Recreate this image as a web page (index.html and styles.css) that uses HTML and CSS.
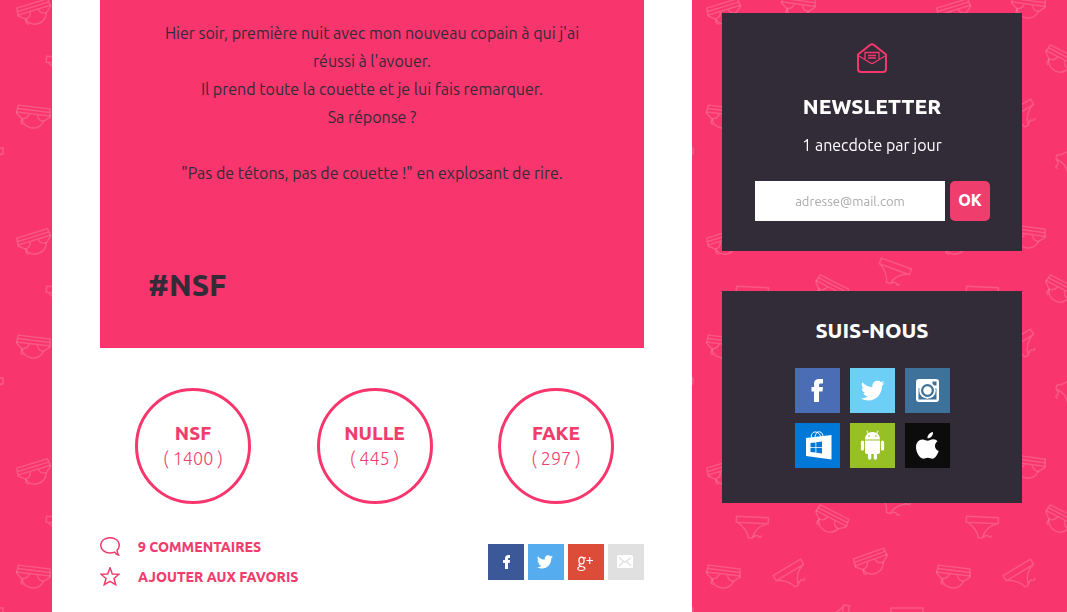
FILE: index.html
```html
<!DOCTYPE html>
<html lang="fr">
<head>
<meta charset="utf-8">
<meta name="viewport" content="width=device-width, initial-scale=1">
<title>#NSF</title>
<link rel="stylesheet" href="styles.css">
</head>
<body>
<svg class="backdrop" aria-hidden="true">
  <defs>
    <g id="brief">
      <path d="M-16-10H16L17-2 11 3Q8 11 0 11T-11 3L-17-2Z"/>
      <path d="M-16-6.500H16M-17-3H17M-11 3Q-5 3-4-3M11 3Q5 3 4-3M-10 4q-3 3 1 5"/>
    </g>
    <g id="thong">
      <path d="M-16-10H16V-4H-16ZM-15-4Q-5 2-3 11H1Q3 0 15-4"/>
      <path d="M2 10q3-3 5-1t3-1"/>
    </g>
    <pattern id="undies" width="230" height="230" patternUnits="userSpaceOnUse">
      <g class="undies-line">
        <use href="#brief" transform="translate(35 13) rotate(-17)"/>
        <use href="#brief" transform="translate(35 243) rotate(-17)"/>
        <use href="#brief" transform="translate(33 117) rotate(7)"/>
        <use href="#thong" transform="translate(62 67) rotate(3)"/>
        <use href="#brief" transform="translate(140 61) rotate(27)"/>
        <use href="#thong" transform="translate(102 116) rotate(-31)"/>
        <use href="#brief" transform="translate(182 103) rotate(-20)"/>
        <use href="#thong" transform="translate(203 43) rotate(20)"/>
        <use href="#thong" transform="translate(147 160) rotate(100)"/>
        <use href="#thong" transform="translate(217 158)"/>
        <use href="#thong" transform="translate(-13 158)"/>
        <use href="#brief" transform="translate(108 7) rotate(8)"/>
        <use href="#brief" transform="translate(108 237) rotate(8)"/>
      </g>
    </pattern>
  </defs>
  <rect width="100%" height="100%" fill="url(#undies)"/>
</svg>

<div class="page">
  <main class="content">
    <article class="story">
      <p class="story-text">Hier soir, première nuit avec mon nouveau copain à qui j'ai réussi à l'avouer.<br>Il prend toute la couette et je lui fais remarquer.<br>Sa réponse ?<br><br>"Pas de tétons, pas de couette !" en explosant de rire.</p>
      <h1 class="story-tag">#NSF</h1>
    </article>

    <div class="votes">
      <button class="vote" type="button"><strong>NSF</strong><span>( 1400 )</span></button>
      <button class="vote" type="button"><strong>NULLE</strong><span>( 445 )</span></button>
      <button class="vote" type="button"><strong>FAKE</strong><span>( 297 )</span></button>
    </div>

    <div class="actions">
      <div class="action-links">
        <a class="action" href="#commentaires">
          <svg class="action-icon" viewBox="0 0 20 20" aria-hidden="true"><path d="M17 13.200C18.500 11.800 19.300 10 19.300 8 19.300 3.800 15.200.7 10 .7S.7 3.800.7 8 4.800 16 10 16C11.700 16 13.200 15.700 14.500 15.100 15.500 16.600 16.800 17.700 18.500 18 17.600 16.600 17.200 15 17 13.200Z"/></svg>
          9 COMMENTAIRES
        </a>
        <a class="action" href="#favoris">
          <svg class="action-icon" viewBox="0 0 20 20" aria-hidden="true"><path d="M10 .8 12.300 7 19 7.200 14 11.500 15.700 17.700 10 14.300 4.300 17.700 6 11.500 1 7.200 7.700 7Z"/></svg>
          AJOUTER AUX FAVORIS
        </a>
      </div>
      <div class="shares">
        <a class="share share-facebook" href="#facebook" aria-label="Facebook"><svg viewBox="0 0 36 36"><path d="M17 25V19H15V16H17V14.500C17 12.200 18.300 11 20.500 11H22V14H21C20.200 14 20 14.300 20 15V16H22L21.700 19H20V25Z"/></svg></a>
        <a class="share share-twitter" href="#twitter" aria-label="Twitter"><svg viewBox="0 0 36 36"><use href="#bird" transform="translate(1.500 2.500) scale(.68)"/></svg></a>
        <a class="share share-google" href="#google" aria-label="Google+"><svg viewBox="0 0 36 36"><g class="google-line"><ellipse cx="13.500" cy="16.500" rx="2.600" ry="3.300"/><path d="M15.500 13.800H18M12 20C9.500 21 12 22 14 22.500 19 23.500 17 26.500 13 26.500 8.500 26.500 9 22.500 13 22.500"/><path d="M18.500 16.500H25M21.700 13V20"/></g></svg></a>
        <a class="share share-mail" href="#mail" aria-label="E-mail"><svg viewBox="0 0 36 36"><rect x="9" y="11" width="16" height="13" rx="1.500"/><path class="mail-lines" d="M11 13.500 17 18.500 23 13.500M11 22 15.500 17.500M23 22 18.500 17.500"/></svg></a>
      </div>
    </div>
  </main>

  <aside class="sidebar">
    <section class="card">
      <svg class="letter" viewBox="0 0 30 30" aria-hidden="true"><path d="M1 11.500 13 2Q15 .4 17 2L29 11.500V26Q29 29 26 29H4Q1 29 1 26Z"/><path class="letter-thin" d="M2 13 13.500 20Q15 21 16.500 20L28 13M8 16V9.500H22V16M11 12.500H19M11 15H19"/></svg>
      <h2 class="card-title">NEWSLETTER</h2>
      <p class="card-text">1 anecdote par jour</p>
      <form class="signup">
        <input class="signup-mail" type="email" placeholder="adresse@mail.com" aria-label="Adresse e-mail">
        <button class="signup-ok" type="button">OK</button>
      </form>
    </section>

    <section class="card">
      <h2 class="card-title">SUIS-NOUS</h2>
      <div class="networks">
        <a class="network net-facebook" href="#fb" aria-label="Facebook"><svg viewBox="0 0 45 45"><path d="M19 34V23.500H16.500V19H19V16.500C19 12.500 20.800 11 24.500 11H28V15.500H26C24.500 15.500 24 16 24 17.500V19H28L27.500 23.500H24V34Z"/></svg></a>
        <a class="network net-twitter" href="#tw" aria-label="Twitter"><svg viewBox="0 0 45 45"><path id="bird" transform="translate(11 12)" d="M23.500 3.200 21 5.800C21 14 15.500 20.500 7.500 20.500 4.700 20.500 2.200 19.700 0 18.300 2.500 18.500 4.800 17.800 6.700 16.300 4.500 16.200 3 15 2.300 13H4.300C2.200 12.400 .8 10.500.8 8.200L2.800 8.700C.8 7 .2 4.500 1.400 2.300 4 5.300 7.500 7.200 11.500 7.300 10.800 3.500 13.500.8 16.300.8 17.800.8 19 1.300 19.900 2.200L23 1.100 21 3.700Z"/></svg></a>
        <a class="network net-instagram" href="#ig" aria-label="Instagram"><svg viewBox="0 0 45 45"><rect x="11" y="11" width="23" height="23" rx="3"/><path class="net-hole" d="M27.500 13.500H31.500V17.500H27.500ZM13.500 20.500H31.500V31.500H13.500Z"/><circle cx="22.500" cy="22.500" r="8.300"/><circle class="net-hole" cx="22.500" cy="22.500" r="6.500"/><circle cx="22.500" cy="22.500" r="4.200"/></svg></a>
        <a class="network net-windows" href="#win" aria-label="Windows Store"><svg viewBox="0 0 45 45"><path d="M11 15 36.500 12V36.500L11 33Z"/><path class="bag-handle" d="M16.500 15.500C15.500 11 18 8.500 21 9 24 9.500 25.500 12 26 14.500M20 14C20.500 10 23 8 25 9 27.500 9.500 28 12 28 14"/><path class="net-hole" d="M15.500 20 20.500 19.400V24H15.500ZM21.300 19.300 27 18.600V24H21.300ZM15.500 24.800H20.500V29.600L15.500 29ZM21.300 24.800H27V30.400L21.300 29.700Z"/></svg></a>
        <a class="network net-android" href="#android" aria-label="Android"><svg viewBox="0 0 45 45"><path d="M15 16.500C15 12 18 9 22.500 9S30 12 30 16.500ZM15 17.500H30V29Q30 31 28 31H27V35Q27 36.700 25.300 36.700T23.700 35V31H21.300V35Q21.300 36.700 19.700 36.700T18 35V31H17Q15 31 15 29Z"/><path class="droid-arms" d="M12.500 19V26M32.500 19V26"/><path class="droid-antenna" d="M18.500 11 17 8M26.500 11 28 8"/><circle class="net-hole" cx="19" cy="13" r=".8"/><circle class="net-hole" cx="26" cy="13" r=".8"/></svg></a>
        <a class="network net-apple" href="#apple" aria-label="Apple"><svg viewBox="0 0 45 45"><path d="M28 9C28.300 12.500 25.500 15.500 22.500 15.300 22.200 12.300 25 9.300 28 9ZM32.500 18.200C29 20.500 29 26 33.700 28 32.500 31.500 30 35.700 27.500 35.700 25.500 35.700 25 34.700 22.800 34.700S20 35.700 18.300 35.700C14.500 35.700 11 29 11 24.300 11 19.500 14 16.500 17.500 16.500 19.700 16.500 21.300 17.800 22.700 17.800S26 16.300 28.200 16.300C30 16.300 31.700 17.100 32.500 18.200Z"/></svg></a>
      </div>
    </section>
  </aside>
</div>
</body>
</html>
```
FILE: styles.css
```css
* {
  box-sizing: border-box;
}

body {
  margin: 0;
  background: #f8356c;
  color: #322c39;
  font-family: Ubuntu, "Noto Sans", "Open Sans", sans-serif;
  font-size: 16px;
  font-weight: 450;
}

h1,
h2,
p {
  margin: 0;
}

h1,
h2,
strong {
  font-weight: 800;
}

a {
  color: inherit;
  text-decoration: none;
}

button,
input {
  border: 0;
  font-family: inherit;
}

.backdrop {
  position: fixed;
  inset: 0;
  width: 100%;
  height: 100%;
  z-index: -1;
}

.undies-line {
  fill: none;
  stroke: #fff;
  stroke-opacity: 0.17;
  stroke-width: 1.5;
  stroke-linejoin: round;
}

.page {
  display: grid;
  grid-template-columns: minmax(0, 1fr) 300px;
  gap: 30px;
  min-height: 100vh;
  padding: 0 45px 0 52px;
}

.content {
  padding: 0 48px 24px;
  background: #fff;
}

.story {
  padding: 19px 48px 41px;
  background: #f8356c;
}

.story-text {
  line-height: 28px;
  text-align: center;
}

.story-tag {
  margin-top: 76px;
  font-size: 30px;
  line-height: 44px;
}

.votes {
  display: flex;
  justify-content: space-between;
  padding: 40px 30px 40px 35px;
}

.vote {
  display: flex;
  flex-direction: column;
  align-items: center;
  justify-content: center;
  width: 116px;
  height: 116px;
  padding: 0;
  border: 3px solid #f8356c;
  border-radius: 50%;
  background: none;
  color: #ef3e6d;
  font-size: 18px;
  line-height: 25px;
}

.vote strong {
  font-size: 19px;
}

.vote span {
  font-weight: 300;
}

.actions {
  display: flex;
  align-items: flex-start;
  justify-content: space-between;
}

.action-links {
  display: grid;
  gap: 10px;
  margin-top: -7px;
}

.action {
  display: flex;
  align-items: center;
  gap: 18px;
  color: #ef3e6d;
  font-size: 14px;
  font-weight: 800;
  line-height: 20px;
}

.action-icon {
  width: 20px;
  height: 20px;
  fill: none;
  stroke: #ef3e6d;
  stroke-width: 1.5;
}

.shares {
  display: flex;
  gap: 4px;
}

.share {
  width: 36px;
  height: 36px;
  fill: #fff;
}

.share svg,
.network svg {
  display: block;
}

.share-facebook { background: #3b5998; }
.share-twitter { background: #55acee; }
.share-google { background: #dd4b39; }
.share-mail { background: #e0e0e0; }

.google-line {
  fill: none;
  stroke: #fff;
  stroke-width: 1.2;
}

.mail-lines {
  fill: none;
  stroke: #e0e0e0;
  stroke-width: 1.3;
}

.sidebar {
  display: flex;
  flex-direction: column;
  gap: 40px;
  padding-top: 13px;
}

.card {
  display: flex;
  flex-direction: column;
  align-items: center;
  padding: 30px 32px;
  background: #322c39;
  color: #fff;
}

.letter {
  width: 30px;
  height: 30px;
  margin-bottom: 24px;
  fill: none;
  stroke: #f8356c;
  stroke-width: 2;
}

.letter-thin {
  stroke-width: 1.3;
}

.card-title {
  font-size: 21px;
  line-height: 18px;
}

.card-text {
  margin: 16px 0 22px;
  line-height: 28px;
}

.signup {
  display: flex;
  justify-content: flex-end;
  gap: 5px;
  width: 100%;
}

.signup-mail {
  width: 190px;
  min-width: 0;
  height: 40px;
  padding: 0 10px;
  background: #fff;
  font-size: 13px;
  font-weight: 450;
  text-align: center;
}

.signup-mail::placeholder {
  color: #a9a9a9;
}

.signup-ok {
  width: 40px;
  height: 40px;
  padding: 0 0 3px;
  border-radius: 5px;
  background: #ef3e6d;
  color: #fff;
  font-size: 16px;
  font-weight: 800;
}

.networks {
  display: grid;
  grid-template-columns: repeat(3, 45px);
  gap: 10px;
  margin: 29px 0 5px;
}

.network {
  height: 45px;
  fill: #fff;
}

.net-facebook { background: #4a6db5; }
.net-twitter { background: #6dcff6; }
.net-instagram { background: #3f729b; }
.net-windows { background: #0078d7; }
.net-android { background: #97c024; }
.net-apple { background: #0c0c0c; }

.net-instagram .net-hole { fill: #3f729b; }
.net-windows .net-hole { fill: #0078d7; }
.net-android .net-hole { fill: #97c024; }

.bag-handle,
.droid-arms,
.droid-antenna {
  fill: none;
  stroke: #fff;
  stroke-linecap: round;
}

.droid-arms {
  stroke-width: 3.2;
}
```
